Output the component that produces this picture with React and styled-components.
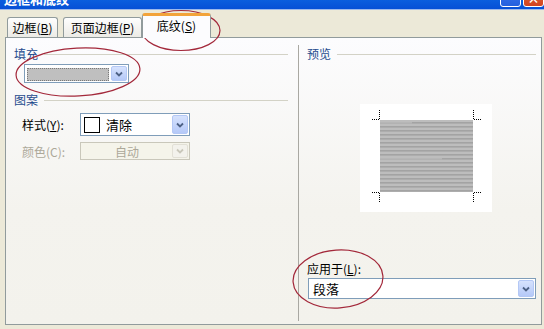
import React from "react";
import styled, { createGlobalStyle } from "styled-components";

const GlobalStyle = createGlobalStyle`
  body { margin: 0; background: #ECE9D8; }
  * { box-sizing: border-box; }
`;

const font = `"Noto Sans CJK SC", "Noto Sans", sans-serif`;

const Window = styled.div`
  position: relative;
  width: 544px;
  height: 329px;
  overflow: hidden;
  background: #ECE9D8;
  font-family: ${font};
  font-size: 12px;
  color: #000;
  display: flex;
  flex-direction: column;
`;

const TitleBar = styled.div`
  flex: none;
  height: 10px;
  display: flex;
  align-items: flex-end;
  overflow: hidden;
  padding-left: 4px;
  background: linear-gradient(#0B5EDE, #0650D6);
  border-bottom: 1px solid #9DB9EB;
`;

const TitleText = styled.div`
  color: #fff;
  font-weight: bold;
  font-size: 13px;
  line-height: 16px;
  margin-bottom: 2px;
  flex: 1;
`;

const CaptionButton = styled.div`
  flex: none;
  width: ${p => p.$w}px;
  height: 22px;
  margin: 0 0 2px ${p => p.$ml}px;
  border: 1px solid #fff;
  border-radius: 3px;
  background: ${p => (p.$close ? "linear-gradient(#E8703E, #D2431F)" : "linear-gradient(#3E7CF0, #2460DE)")};
  color: #fff;
  font-weight: bold;
  font-size: 12px;
  line-height: 10px;
  display: flex;
  align-items: flex-end;
  justify-content: center;
  padding-bottom: 2px;
`;

const TabStrip = styled.div`
  flex: none;
  height: 27px;
  display: flex;
  align-items: flex-end;
  padding-left: 7px;
  position: relative;
  z-index: 1;
`;

const Tab = styled.div`
  width: ${p => p.$w}px;
  margin-left: ${p => p.$ml}px;
  height: ${p => (p.$active ? 25 : 20)}px;
  margin-bottom: ${p => (p.$active ? -1 : 0)}px;
  border: 1px solid #919B9C;
  border-bottom: none;
  border-top: ${p => (p.$active ? "3px solid #F2A33A" : "1px solid #919B9C")};
  border-radius: 3px 3px 0 0;
  background: ${p => (p.$active ? "#FCFCFE" : "linear-gradient(#FEFEFE, #ECEBE6)")};
  display: flex;
  justify-content: center;
  align-items: center;
  padding-bottom: ${p => (p.$active ? 3 : 0)}px;
  white-space: nowrap;
`;

const Key = styled.span`
  text-decoration: underline;
`;

const Panel = styled.div`
  flex: none;
  height: 288px;
  margin: 0 2px 0 5px;
  border: 1px solid #919B9C;
  background: linear-gradient(#FCFCFE, #F4F3EE 60%, #F3F2EC);
  display: grid;
  grid-template-columns: 292px 1px 1fr;
`;

const Column = styled.div`
  display: flex;
  flex-direction: column;
  padding: 9px ${p => p.$pr}px 0 8px;
`;

const Separator = styled.div`
  background: #A9A8A2;
  margin: 7px 0 3px;
`;

const GroupHeader = styled.div`
  display: flex;
  align-items: center;
  height: 14px;
  line-height: 14px;
  color: #1F4B8E;
  margin-top: ${p => p.$mt || 0}px;
  &::after {
    content: "";
    flex: 1;
    height: 1px;
    background: #D3D2C6;
    margin-left: 6px;
  }
`;

const FieldRow = styled.div`
  display: flex;
  align-items: center;
  margin-top: ${p => p.$mt}px;
  margin-left: ${p => p.$ml}px;
`;

const FieldLabel = styled.div`
  width: 58px;
  color: ${p => (p.$disabled ? "#ACA899" : "#000")};
  white-space: nowrap;
`;

const Combo = styled.div`
  width: ${p => p.$w}px;
  height: ${p => p.$h}px;
  border: 1px solid ${p => (p.$disabled ? "#C9C7BA" : "#7F9DB9")};
  background: ${p => (p.$disabled ? "#F5F4EA" : "#fff")};
  display: flex;
  align-items: stretch;
  padding: 1px;
  margin-top: ${p => p.$mt || 0}px;
  margin-left: ${p => p.$ml || 0}px;
`;

const ComboValue = styled.div`
  flex: 1;
  display: flex;
  align-items: center;
  justify-content: ${p => (p.$center ? "center" : "flex-start")};
  padding-left: ${p => p.$pl || 0}px;
  color: ${p => (p.$disabled ? "#ACA899" : "#000")};
  font-size: ${p => p.$fs || 12}px;
  gap: 6px;
`;

const FillSwatch = styled.div`
  width: 82px;
  height: 13px;
  margin: 1px 0 0 1px;
  background: #BFBFBF;
  border: 1px dotted #7A7A7A;
`;

const PatternBox = styled.div`
  width: 16px;
  height: 16px;
  border: 1px solid #000;
  background: #fff;
`;

const DropButton = styled.div`
  flex: none;
  width: 16px;
  border-radius: 2px;
  border: 1px solid ${p => (p.$disabled ? "#E2E0D6" : "#B4C8F5")};
  background: ${p => (p.$disabled ? "#F3F2EC" : "linear-gradient(#D6E2FD, #B5C9F8)")};
  display: flex;
  align-items: center;
  justify-content: center;
`;

const Label = styled.div`
  height: 14px;
  line-height: 14px;
  margin-top: ${p => p.$mt}px;
  white-space: nowrap;
`;

const PreviewFrame = styled.div`
  margin: 43px 0 0 53px;
  width: 132px;
  height: 108px;
`;

const Overlay = styled.svg`
  position: absolute;
  left: 0;
  top: 0;
  pointer-events: none;
`;

const Chevron = ({ disabled }) => (
  <svg width="8" height="6" viewBox="0 0 8 6">
    <path d="M1 1.5 L4 4.5 L7 1.5" fill="none" stroke={disabled ? "#C9C7BA" : "#4D6185"} strokeWidth="1.8" />
  </svg>
);

const Preview = () => {
  const stripes = [];
  for (let y = 2; y < 72; y += 4) {
    stripes.push(<rect key={y} x="20" y={16 + y} width="93" height="1.6" fill="#A3A3A3" />);
  }
  const dot = { stroke: "#000", strokeWidth: 1, strokeDasharray: "1 1", fill: "none" };
  return (
    <svg width="132" height="108" viewBox="0 0 132 108">
      <rect x="0" y="0" width="132" height="108" fill="#FFFFFF" />
      <rect x="20" y="16" width="93" height="72" fill="#BDBDBD" />
      {stripes}
      <rect x="20" y="18" width="32" height="1.6" fill="#B6B6B6" />
      <rect x="20" y="54" width="62" height="1.6" fill="#B6B6B6" />
      <path d="M12 15.5 H19.5 V6" {...dot} />
      <path d="M113.5 6 V15.5 H122" {...dot} />
      <path d="M12 88.5 H19.5 V98" {...dot} />
      <path d="M113.5 98 V88.5 H122" {...dot} />
    </svg>
  );
};

const App = () => {
  return (
    <Window>
      <GlobalStyle />
      <TitleBar>
        <TitleText>边框和底纹</TitleText>
        <CaptionButton $w={21} $ml={0}>·</CaptionButton>
        <CaptionButton $w={21} $ml={2} $close>×</CaptionButton>
      </TitleBar>

      <TabStrip>
        <Tab $w={51} $ml={0}>边框(<Key>B</Key>)</Tab>
        <Tab $w={79} $ml={5}>页面边框(<Key>P</Key>)</Tab>
        <Tab $w={69} $ml={0} $active>底纹(<Key>S</Key>)</Tab>
      </TabStrip>

      <Panel>
        <Column $pr={10}>
          <GroupHeader>填充</GroupHeader>
          <Combo $w={105} $h={19} $mt={3} $ml={10}>
            <ComboValue>
              <FillSwatch />
            </ComboValue>
            <DropButton>
              <Chevron />
            </DropButton>
          </Combo>

          <GroupHeader $mt={10}>图案</GroupHeader>
          <FieldRow $mt={6} $ml={8}>
            <FieldLabel>样式(<Key>Y</Key>):</FieldLabel>
            <Combo $w={110} $h={23}>
              <ComboValue $pl={2} $fs={13}>
                <PatternBox />
                清除
              </ComboValue>
              <DropButton>
                <Chevron />
              </DropButton>
            </Combo>
          </FieldRow>
          <FieldRow $mt={6} $ml={8}>
            <FieldLabel $disabled>颜色(C):</FieldLabel>
            <Combo $w={110} $h={18} $disabled>
              <ComboValue $center $disabled>自动</ComboValue>
              <DropButton $disabled>
                <Chevron disabled />
              </DropButton>
            </Combo>
          </FieldRow>
        </Column>

        <Separator />

        <Column $pr={5}>
          <GroupHeader>预览</GroupHeader>
          <PreviewFrame>
            <Preview />
          </PreviewFrame>
          <Label $mt={50}>应用于(<Key>L</Key>):</Label>
          <Combo $w={228} $h={21} $mt={2} $ml={1}>
            <ComboValue $pl={3} $fs={13}>段落</ComboValue>
            <DropButton>
              <Chevron />
            </DropButton>
          </Combo>
        </Column>
      </Panel>

      <Overlay width="544" height="329" viewBox="0 0 544 329">
        <g fill="none" stroke="#A3283A" strokeWidth="1.2">
          <ellipse cx="181" cy="30.5" rx="39" ry="20" />
          <ellipse cx="78" cy="72" rx="62" ry="24" transform="rotate(-3 78 72)" />
          <ellipse cx="338" cy="279" rx="45" ry="29" transform="rotate(-4 338 279)" />
        </g>
      </Overlay>
    </Window>
  );
};

export default App;
